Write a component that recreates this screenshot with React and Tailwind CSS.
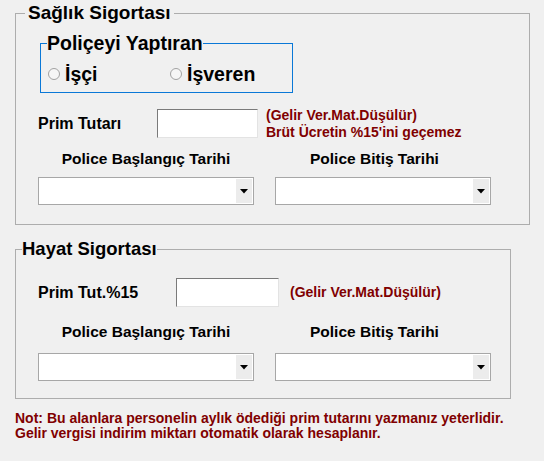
const red = "text-[#800000]"

function Radio({ label }) {
  return (
    <div className="flex items-center">
      <span className="w-[12px] h-[12px] rounded-full border border-[#a2a2a2] bg-[#f6f6f6]" />
      <span className="ml-[5px] text-[19.5px] leading-[20px] font-bold text-black">{label}</span>
    </div>
  )
}

function TextBox({ w }) {
  return (
    <div
      className={`h-[29px] bg-white border border-t-[#7a7a7a] border-l-[#7a7a7a] border-r-[#e3e3e3] border-b-[#e3e3e3] ${w}`}
    />
  )
}

function Combo() {
  return (
    <div className="w-[216px] h-[28px] bg-white border border-[#a7a7a7] flex justify-end p-[1px]">
      <div className="w-[16px] h-full bg-[#ececec] flex items-center justify-center">
        <svg width="8" height="5" viewBox="0 0 8 5">
          <polygon points="0,0 8,0 4,4.5" fill="#000" />
        </svg>
      </div>
    </div>
  )
}

function DateRows({ gapTop, comboGap }) {
  return (
    <>
      <div className={`flex text-[15.5px] leading-[20px] font-bold text-black ${gapTop}`}>
        <div className="ml-[22px] w-[216px] text-center">Police Başlangıç Tarihi</div>
        <div className="ml-[56px]">Police Bitiş Tarihi</div>
      </div>
      <div className={`flex ml-[22px] gap-[21px] ${comboGap}`}>
        <Combo />
        <Combo />
      </div>
    </>
  )
}

export default function App() {
  return (
    <div
      className="w-[544px] h-[461px] bg-[#f0f0f0] overflow-hidden pt-[3px]"
      style={{ fontFamily: '"Liberation Sans", Arial, sans-serif' }}
    >
      <fieldset className="ml-[15px] w-[515px] h-[222px] border border-[#adadad]">
        <legend className="ml-[9px] px-[3px] text-[19px] leading-[20px] font-bold text-black">
          Sağlık Sigortası
        </legend>

        <fieldset className="mt-[10px] ml-[24px] w-[253px] h-[60px] border border-[#0a78d7]">
          <legend className="ml-[6px] text-[19.5px] leading-[20px] font-bold text-black">
            Poliçeyi Yaptıran
          </legend>
          <div className="flex mt-[11px] ml-[7px]">
            <div className="w-[122px]">
              <Radio label="İşçi" />
            </div>
            <Radio label="İşveren" />
          </div>
        </fieldset>

        <div className="flex h-[29px] mt-[16px]">
          <div className="ml-[22px] w-[119px] flex items-center text-[16px] font-bold text-black">
            Prim Tutarı
          </div>
          <TextBox w="w-[101px]" />
          <div className={`ml-[8px] -mt-[2px] text-[14px] leading-[17px] font-bold ${red}`}>
            <div>(Gelir Ver.Mat.Düşülür)</div>
            <div>Brüt Ücretin %15'ini geçemez</div>
          </div>
        </div>

        <DateRows gapTop="mt-[11px]" comboGap="mt-[8px]" />
      </fieldset>

      <fieldset className="ml-[15px] mt-[14px] w-[496px] h-[160px] border border-[#adadad]">
        <legend className="ml-[6px] text-[18.5px] leading-[20px] font-bold text-black">
          Hayat Sigortası
        </legend>

        <div className="flex h-[29px] mt-[19px]">
          <div className="ml-[22px] w-[138px] flex items-center text-[16px] font-bold text-black">
            Prim Tut.%15
          </div>
          <TextBox w="w-[103px]" />
          <div className={`ml-[11px] flex items-center text-[14px] font-bold ${red}`}>
            (Gelir Ver.Mat.Düşülür)
          </div>
        </div>

        <DateRows gapTop="mt-[15px]" comboGap="mt-[11px]" />
      </fieldset>

      <div className={`ml-[15px] mt-[12px] text-[14px] leading-[15px] font-bold ${red}`}>
        <div>Not: Bu alanlara personelin aylık ödediği prim tutarını yazmanız yeterlidir.</div>
        <div>Gelir vergisi indirim miktarı otomatik olarak hesaplanır.</div>
      </div>
    </div>
  )
}
